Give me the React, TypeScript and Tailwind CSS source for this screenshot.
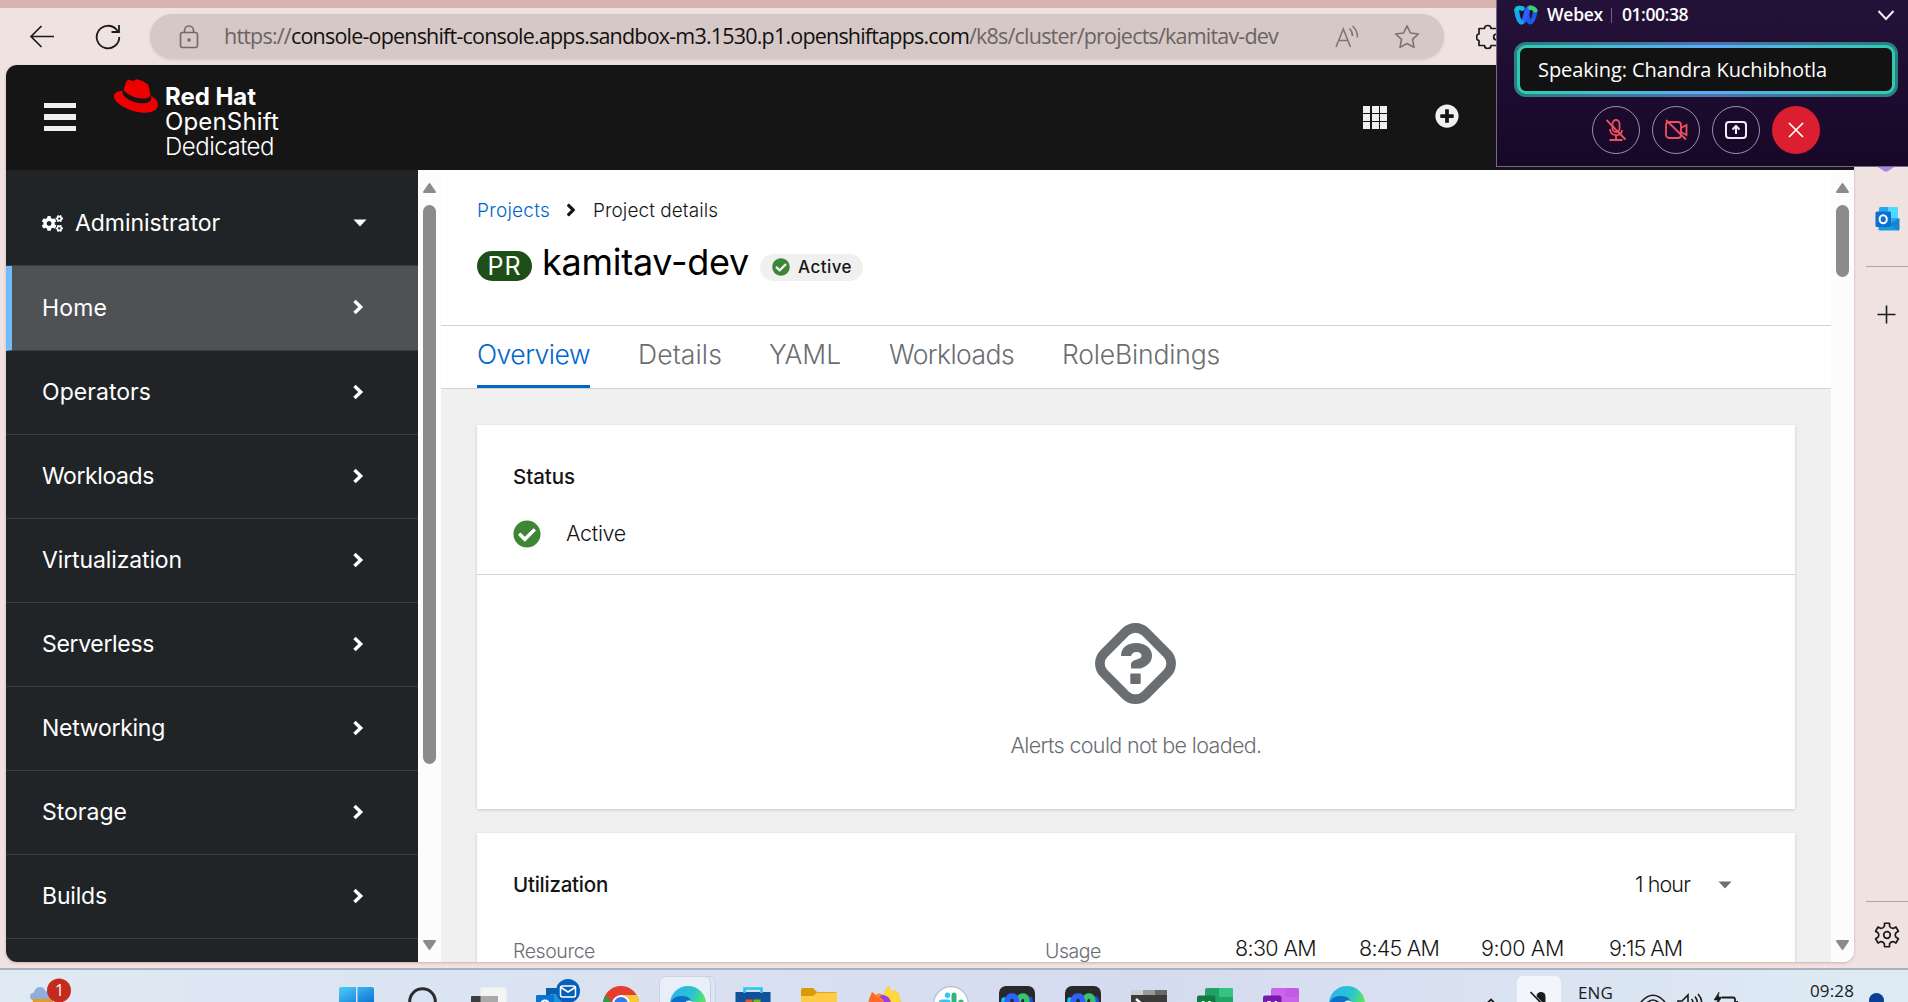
import { useLayoutEffect, useRef } from "react";
import type { ReactNode } from "react";
import { FaAngleRight, FaCheckCircle, FaCogs, FaPlusCircle } from "react-icons/fa";
import { SiRedhat } from "react-icons/si";

/* Text that tracks its letters out or in to fill a set width. */
function Label({ width, className = "", children }: { width: number; className?: string; children: ReactNode }) {
  const ref = useRef<HTMLSpanElement>(null);
  useLayoutEffect(() => {
    const el = ref.current;
    if (!el) return;
    el.style.letterSpacing = "0px";
    const count = (el.textContent ?? "").length;
    el.style.letterSpacing = `${(width - el.getBoundingClientRect().width) / count}px`;
  }, [width]);
  return (
    <span ref={ref} className={`inline-block shrink-0 whitespace-nowrap leading-none ${className}`}>
      {children}
    </span>
  );
}

function ScrollArrow({ down = false }: { down?: boolean }) {
  return (
    <svg width="15" height="12" viewBox="0 0 15 12" className={down ? "rotate-180" : ""}>
      <path d="M7.5 2 L13 10 H2 Z" fill="#8b8b8b" stroke="#8b8b8b" strokeWidth="2" strokeLinejoin="round" />
    </svg>
  );
}

function Scrollbar({ thumb }: { thumb: string }) {
  return (
    <div className="flex w-[23px] shrink-0 flex-col items-center bg-[#fcfcfc] pt-3 pb-[11px]">
      <ScrollArrow />
      <div className={`mt-[11px] w-[13px] shrink-0 rounded-full bg-[#8b8b8b] ${thumb}`} />
      <div className="grow" />
      <ScrollArrow down />
    </div>
  );
}

function BrowserToolbar() {
  return (
    <div className="flex h-[57px] shrink-0 items-center bg-[#f0e2e0]">
      <svg className="ml-[29px] shrink-0" width="26" height="24" viewBox="0 0 26 24" fill="none" stroke="#1b1b1b" strokeWidth="1.7">
        <path d="M25 11.500 H2 M12.5 1 L2 11.500 L12.5 22" />
      </svg>
      <svg className="ml-[40px] shrink-0" width="26" height="26" viewBox="0 0 26 26" fill="none" stroke="#1b1b1b" strokeWidth="1.8">
        <path d="M24.3 13 A11.3 11.3 0 1 1 21.5 5.6 L24 8 M24 1 V8 H16.5" />
      </svg>
      <div className="ml-[29px] flex h-[45px] w-[1294px] shrink-0 items-center rounded-full bg-[#d6c8c6] shadow-[0_1px_3px_#d9c8c5]">
        <svg className="ml-[29px] shrink-0" width="20" height="24" viewBox="0 0 20 24" fill="none" stroke="#716a69" strokeWidth="1.6">
          <rect x="1.5" y="7.5" width="17" height="15" rx="2" />
          <path d="M5.5 7.5 V5.5 a4.5 4.5 0 0 1 9 0 V7.5" />
          <circle cx="10" cy="15" r="0.9" fill="#716a69" />
        </svg>
        <Label width={1054} className="mb-[2px] ml-[25px] font-['Open_Sans'] text-[21.5px] text-[#6b6462]">
          https://<span className="text-[#111]">console-openshift-console.apps.sandbox-m3.1530.p1.openshiftapps.com</span>
          /k8s/cluster/projects/kamitav-dev
        </Label>
        <svg className="ml-[57px] shrink-0" width="25" height="24" viewBox="0 0 25 24" fill="none" stroke="#7b7473" strokeWidth="1.5">
          <path d="M1 22 L8.3 4 L15.5 22 M3.8 15.5 H13" />
          <path d="M14.5 3.5 C16.5 5.500 17.500 8 17.500 11 M17.5 1 C21 4 22.500 7.500 22.500 12.5" />
        </svg>
        <svg className="ml-[34px] shrink-0" width="26" height="26" viewBox="0 0 26 26" fill="none" stroke="#7b7473" strokeWidth="1.6" strokeLinejoin="round">
          <path d="M13 1.8 L16.4 9 L24.4 10 L18.500 15.400 L20 23.400 L13 19.500 L6 23.400 L7.500 15.400 L1.600 10 L9.600 9 Z" />
        </svg>
      </div>
      <svg className="ml-[32px] shrink-0" width="26" height="26" viewBox="0 0 26 26" fill="none" stroke="#1b1b1b" strokeWidth="1.7" strokeLinejoin="round">
        <path d="M3 4.500 H8.500 C8.500 0.500 15 0.500 15 4.500 H21 V10 C16.500 10 16.500 16 21 16 V21.500 H15 C15 25.500 8.500 25.500 8.500 21.500 H3 V16.500 C-0.200 16.500 -0.200 10 3 10 Z" />
      </svg>
    </div>
  );
}

function Masthead() {
  return (
    <header className="flex h-[105px] shrink-0 items-start bg-[#151515] text-white">
      <div className="mt-[38px] ml-[38px] flex w-8 shrink-0 flex-col gap-[6px]">
        <div className="h-[5.400px] bg-[#f0f0f0]" />
        <div className="h-[5.400px] bg-[#f0f0f0]" />
        <div className="h-[5.400px] bg-[#f0f0f0]" />
      </div>
      <SiRedhat className="mt-[9px] ml-[38px] size-[44px] shrink-0 text-[#ee0000]" />
      <div className="mt-[20px] ml-[7px] flex w-[200px] flex-col items-start">
        <Label width={91} className="h-[25px] font-['Inter'] text-[24px] font-bold">Red Hat</Label>
        <Label width={114} className="h-[25px] font-['Inter'] text-[24px]">OpenShift</Label>
        <Label width={109} className="h-[25px] font-['Inter'] text-[24px] font-light">Dedicated</Label>
      </div>
      <div className="mt-[41px] ml-[998px] grid w-6 shrink-0 grid-cols-3 gap-[1.500px]">
        {Array.from({ length: 9 }, (_, i) => (
          <div key={i} className="h-[6.500px] bg-[#f0f0f0]" />
        ))}
      </div>
      <FaPlusCircle className="mt-[39px] ml-[48px] size-6 shrink-0 text-[#f0f0f0]" />
    </header>
  );
}

const NAV: { label: string; width: number }[] = [
  { label: "Operators", width: 109 },
  { label: "Workloads", width: 112 },
  { label: "Virtualization", width: 140 },
  { label: "Serverless", width: 112 },
  { label: "Networking", width: 123 },
  { label: "Storage", width: 85 },
  { label: "Builds", width: 65 },
];

function NavChevron() {
  return (
    <svg className="mb-[2px]" width="14" height="16" viewBox="0 0 14 16" fill="none" stroke="#fff" strokeWidth="3.400">
      <path d="M3.500 2 L9.700 8 L3.500 14" />
    </svg>
  );
}

function Sidebar() {
  return (
    <nav className="flex w-[412px] shrink-0 flex-col bg-[#212427] font-['Inter'] text-[23px] text-white">
      <div className="flex h-[96px] shrink-0 items-center border-b border-[#3c3f42] pt-[11px] pr-[51px] pl-9">
        <FaCogs className="h-[17px] w-[21px] shrink-0" />
        <Label width={145} className="ml-3">Administrator</Label>
        <svg className="ml-auto" width="14" height="8" viewBox="0 0 14 8">
          <path d="M0.500 0.500 H13.500 L7 7.500 Z" fill="#fff" />
        </svg>
      </div>
      <div className="flex h-[85px] shrink-0 items-center justify-between border-b border-[#3c3f42] border-l-[6px] border-l-[#73bcf7] bg-[#4f5255] pr-[53px] pl-[30px]">
        <Label width={65}>Home</Label>
        <NavChevron />
      </div>
      {NAV.map(({ label, width }) => (
        <div key={label} className="flex h-[84px] shrink-0 items-center justify-between border-b border-[#3c3f42] pr-[53px] pl-9">
          <Label width={width}>{label}</Label>
          <NavChevron />
        </div>
      ))}
    </nav>
  );
}

function UnknownIcon() {
  return (
    <svg className="mr-[2px]" width="81" height="81" viewBox="0 0 81 81" fill="#6a6e73">
      <rect x="11.200" y="11.200" width="58.600" height="58.600" rx="14" transform="rotate(45 40.500 40.500)" fill="none" stroke="#6a6e73" strokeWidth="9.600" />
      <path d="M26 33 C26 25 32 20 41 20 C50 20 57 25 57 32.500 C57 40 51 43.500 45.500 45.500 H36 V42 C36 38 39 37.500 43 36 C46 35 46.500 34 46.500 32.500 C46.500 30.200 44 29 41.500 29 C38.500 29 36.500 31 36 33 Z" />
      <rect x="35.300" y="50.500" width="10.400" height="10.400" rx="1" />
    </svg>
  );
}

function ProjectPage() {
  return (
    <main className="flex w-[1390px] shrink-0 flex-col overflow-hidden bg-white font-['Inter'] text-[#151515]">
      <div className="flex h-[155px] shrink-0 flex-col pl-9">
        <div className="mt-[30px] flex h-5 items-center text-[19px] font-light">
          <Label width={73} className="text-[#0066cc]">Projects</Label>
          <FaAngleRight className="ml-[11px] size-[20px]" />
          <Label width={125} className="ml-[12px]">Project details</Label>
        </div>
        <div className="mt-[21px] flex h-[40px] items-center">
          <div className="mt-[10px] flex h-[30px] w-[55px] shrink-0 items-center justify-center rounded-full bg-[#1f4f18] text-white">
            <Label width={34} className="text-[25px]">PR</Label>
          </div>
          <Label width={207} className="mt-[2px] ml-[10px] text-[36px] text-black">kamitav-dev</Label>
          <div className="mt-[12px] ml-[11px] flex h-[27px] w-[103px] shrink-0 items-center rounded-full bg-[#f0f0f0] pl-3">
            <FaCheckCircle className="size-[18px] text-[#3e8635]" />
            <Label width={54} className="ml-2 text-[17px] font-medium">Active</Label>
          </div>
        </div>
      </div>
      <div className="flex h-[64px] shrink-0 items-stretch border-y border-[#d2d2d2] pl-9 text-[26.500px] font-light text-[#6a6e73]">
        <div className="flex h-[62px] shrink-0 flex-col border-b-[3px] border-[#0066cc] pt-[15px] text-[#0066cc]">
          <Label width={113}>Overview</Label>
        </div>
        <Label width={84} className="mt-[15px] ml-[48px]">Details</Label>
        <Label width={72} className="mt-[15px] ml-[47px]">YAML</Label>
        <Label width={125} className="mt-[15px] ml-[48px]">Workloads</Label>
        <Label width={158} className="mt-[15px] ml-[48px]">RoleBindings</Label>
      </div>
      <div className="flex grow flex-col bg-[#f0f0f0] px-9 pt-9">
        <section className="flex h-[384px] shrink-0 flex-col bg-white shadow-[0_1px_3px_rgba(3,3,3,0.180)]">
          <div className="h-[150px] shrink-0 border-b border-[#d2d2d2] pt-[41px] pl-9">
            <Label width={62} className="text-[20.500px] font-medium">Status</Label>
            <div className="mt-[30px] flex items-center">
              <FaCheckCircle className="size-7 text-[#3e8635]" />
              <Label width={60} className="ml-[25px] text-[21.500px] font-light">Active</Label>
            </div>
          </div>
          <div className="flex flex-col items-center pt-[48px]">
            <UnknownIcon />
            <Label width={251} className="mt-[31px] text-[21.500px] font-light text-[#6a6e73]">Alerts could not be loaded.</Label>
          </div>
        </section>
        <section className="mt-[24px] h-[140px] bg-white px-9 pt-[40px] shadow-[0_1px_3px_rgba(3,3,3,0.180)]">
          <div className="flex h-6 items-center">
            <Label width={95} className="text-[20.500px] font-medium">Utilization</Label>
            <Label width={55} className="ml-auto text-[21.500px] font-light">1 hour</Label>
            <svg className="mr-[27px] ml-[28px]" width="14" height="8" viewBox="0 0 14 8">
              <path d="M0.500 0.500 H13.500 L7 7.500 Z" fill="#6a6e73" />
            </svg>
          </div>
          <div className="mt-[40px] flex h-6 items-center text-[21.500px] font-light">
            <Label width={82} className="mt-[6px] text-[19.500px] text-[#6a6e73]">Resource</Label>
            <Label width={56} className="mt-[6px] ml-[450px] text-[19.500px] text-[#6a6e73]">Usage</Label>
            <Label width={81} className="ml-[134px]">8:30 AM</Label>
            <Label width={80} className="ml-[43px]">8:45 AM</Label>
            <Label width={83} className="ml-[42px]">9:00 AM</Label>
            <Label width={73} className="ml-[45px]">9:15 AM</Label>
          </div>
        </section>
      </div>
    </main>
  );
}

/* Six-toothed outline of a cog, traced around its centre. */
const COG = Array.from({ length: 6 }, (_, i) => {
  const at = (deg: number, r: number) => {
    const a = ((i * 60 + deg - 90) * Math.PI) / 180;
    return `${(13 + r * Math.cos(a)).toFixed(2)} ${(13 + r * Math.sin(a)).toFixed(2)}`;
  };
  return `${i ? "L" : "M"}${at(-12, 12)} L${at(12, 12)} L${at(17, 9)} Q${at(30, 7.6)} ${at(43, 9)}`;
}).join(" ");

function EdgeSidebar() {
  return (
    <aside className="flex w-[54px] shrink-0 flex-col items-end">
      <svg className="mt-[96px] mr-[12px] shrink-0" width="20" height="14" viewBox="0 0 20 14">
        <path d="M0 5 H20 L12 10 Q10 11.500 8 10 Z" fill="#b083e0" />
      </svg>
      <svg className="mt-[31px] mr-[8px] shrink-0" width="25" height="26" viewBox="0 0 25 26">
        <rect x="4" y="1" width="19" height="22" rx="1.500" fill="#28a8ea" />
        <path d="M13 1 H21.500 Q23 1 23 2.500 V12 H13 Z" fill="#50d9ff" />
        <path d="M3.500 13 L24 24.500 H5 Q3.500 24.500 3.500 23 Z" fill="#1999df" />
        <path d="M14 18 L24.500 12 V23 Q24.500 24.500 23 24.500 Z" fill="#1486cf" />
        <rect x="0.500" y="5.500" width="15.500" height="15.500" rx="1.500" fill="#0a6fd0" />
        <ellipse cx="8.200" cy="13.200" rx="3.600" ry="4" fill="none" stroke="#fff" strokeWidth="2" />
      </svg>
      <div className="mt-[34px] h-px w-[42px] shrink-0 bg-[#b5a6a4]" />
      <svg className="mt-[38px] mr-[12px] shrink-0" width="19" height="19" viewBox="0 0 19 19" stroke="#1b1b1b" strokeWidth="1.600">
        <path d="M9.500 0.500 V18.500 M0.500 9.500 H18.500" />
      </svg>
      <div className="mt-[577px] h-px w-[42px] shrink-0 bg-[#b5a6a4]" />
      <svg className="mt-[20px] mr-[8px] shrink-0" width="26" height="26" viewBox="0 0 26 26" fill="none" stroke="#1b1b1b" strokeWidth="1.700" strokeLinejoin="round">
        <path d={`${COG} Z`} />
        <circle cx="13" cy="13" r="3.300" />
      </svg>
    </aside>
  );
}

function WebexMark({ className }: { className: string }) {
  return (
    <svg className={className} viewBox="0 0 24 20" fill="none" strokeLinecap="round" strokeWidth="4.600">
      <path d="M21.500 5.500 C20.500 11 19 17.200 16 17.200 C13 17.200 12 2.800 15.500 2.800" stroke="#1f5bea" />
      <path d="M2.600 5.500 C3.500 12 5 17.200 8 17.200 C11.500 17.200 11.500 2.800 16 2.800" stroke="#2e62ff" />
      <path d="M2.600 5.500 C3.500 12 5 17.200 7.500 17.200" stroke="#12a8e8" />
      <path d="M2.600 4.500 C3 3 6 2.500 8.500 3.500" stroke="#0bbfe0" />
      <path d="M16.500 2.800 C18.500 2.800 20 3.500 21 5.200" stroke="#3fd06a" />
    </svg>
  );
}

function WebexWindow() {
  return (
    <div className="absolute top-0 right-0 flex h-[167px] w-[412px] flex-col border-b border-l border-[#75688a] bg-linear-to-b from-[#241239] to-[#170727] font-['Open_Sans'] text-white">
      <div className="flex h-[30px] shrink-0 items-center pl-[17px]">
        <WebexMark className="h-5 w-6 shrink-0" />
        <Label width={56} className="ml-[9px] text-[17.500px] font-semibold">Webex</Label>
        <div className="ml-[8px] h-[15px] w-px bg-[#6e6280]" />
        <Label width={66} className="ml-[10px] text-[17.500px] font-semibold">01:00:38</Label>
        <svg className="ml-auto mr-[13px]" width="18" height="12" viewBox="0 0 18 12" fill="none" stroke="#f3f0f5" strokeWidth="2">
          <path d="M1.500 2 L9 10 L16.500 2" />
        </svg>
      </div>
      <div className="mt-[12px] ml-[17px] h-[55px] w-[384px] shrink-0 rounded-[12px] bg-linear-to-r from-[#2a7f80] via-[#4b76a9] to-[#2a7f80] p-[3px]">
        <div className="h-full rounded-[9px] bg-linear-to-r from-[#2fc9b2] via-[#5ea9fb] to-[#2fc9b2] p-[3px]">
          <div className="flex h-full items-center rounded-[6px] bg-[#121212] pl-[18px]">
            <Label width={289} className="text-[20px]">Speaking: Chandra Kuchibhotla</Label>
          </div>
        </div>
      </div>
      <div className="mt-[8.500px] ml-[95px] flex gap-3">
        <div className="flex size-12 items-center justify-center rounded-full border border-[#9a90a8]">
          <svg width="22" height="24" viewBox="0 0 22 24" fill="none" stroke="#ee5060" strokeWidth="1.800">
            <rect x="7.500" y="2" width="7" height="12" rx="3.500" />
            <path d="M5 11 C5 19 17 19 17 12 M11 17 V22 M4.500 22 H17.500 M1.500 2 L20.500 21.500" />
          </svg>
        </div>
        <div className="flex size-12 items-center justify-center rounded-full border border-[#9a90a8]">
          <svg width="24" height="24" viewBox="0 0 24 24" fill="none" stroke="#ee5060" strokeWidth="1.800">
            <rect x="2" y="4" width="15" height="16" rx="3" />
            <path d="M17 10 L22.500 7 V17 L17 14 M2 2 L22 21.500" />
          </svg>
        </div>
        <div className="flex size-12 items-center justify-center rounded-full border border-[#9a90a8]">
          <svg width="24" height="20" viewBox="0 0 24 20" fill="none" stroke="#f0eef3" strokeWidth="2">
            <rect x="2" y="2" width="20" height="16" rx="3" />
            <path d="M12 14 V6.500 M8.500 9.500 L12 6 L15.500 9.500" />
          </svg>
        </div>
        <div className="flex size-12 items-center justify-center rounded-full bg-[#db1f30]">
          <svg width="16" height="16" viewBox="0 0 16 16" stroke="#fff" strokeWidth="1.700">
            <path d="M1 1 L15 15 M15 1 L1 15" />
          </svg>
        </div>
      </div>
    </div>
  );
}

function EdgeLogo({ id }: { id: string }) {
  return (
    <svg className="shrink-0" width="36" height="36" viewBox="0 0 36 36">
      <defs>
        <linearGradient id={id} x1="0" y1="0" x2="1" y2="0.450">
          <stop offset="0.100" stopColor="#2fb2ee" />
          <stop offset="0.600" stopColor="#28c4cf" />
          <stop offset="1" stopColor="#63e94f" />
        </linearGradient>
      </defs>
      <circle cx="18" cy="18" r="18" fill={`url(#${id})`} />
      <path d="M0 19 C1 12 7 10 12 10 C19 10 22 14 22 18 L12 30 L2 26 Z" fill="#0c6fc4" />
      <circle cx="19" cy="19" r="4.500" fill="#eaf6fc" />
    </svg>
  );
}

function WebexTile() {
  return (
    <svg width="36" height="36" viewBox="0 0 36 36" fill="none" strokeLinecap="round" strokeWidth="5.500">
      <rect width="36" height="36" rx="7" fill="#29292b" />
      <path d="M30 13 C31.500 13 31 16 31 18" stroke="#1a53d8" />
      <path d="M18 22 C19 14 20 10 24 10 C28 10 28 14 28 20" stroke="#37c46d" />
      <path d="M5 14 C5 24 9 22 9 17" stroke="#13c6ee" />
      <path d="M8 16 C9 10 11 10 14 10 C18 10 18 20 20 24" stroke="#2e62ff" />
    </svg>
  );
}

function OfficeTile({ letter, dark, tones }: { letter: string; dark: string; tones: [string, string] }) {
  return (
    <svg width="36" height="34" viewBox="0 0 36 34">
      <rect x="8" width="28" height="30" rx="2" fill={tones[0]} />
      <path d="M22 0 H34 Q36 0 36 2 V9 H22 Z" fill={tones[1]} />
      <rect y="7.500" width="18.500" height="19" rx="2" fill={dark} />
      <text x="9.200" y="22.500" textAnchor="middle" fontSize="15" fontWeight="700" fill="#fff" className="font-['Open_Sans']">
        {letter}
      </text>
    </svg>
  );
}

function TaskCell({ top, children }: { top: string; children: ReactNode }) {
  return <div className={`flex w-[66px] shrink-0 justify-center ${top}`}>{children}</div>;
}

function Taskbar() {
  return (
    <footer className="flex h-[34px] shrink-0 items-start overflow-hidden border-t-2 border-[#a9b1bf] bg-linear-to-r from-[#dfeaf4] via-[#d5dbef] via-60% to-[#deebf4]">
      <div className="flex w-[324px] shrink-0 pt-[8px] pl-[29px]">
        <svg width="46" height="26" viewBox="0 0 46 26">
          <path d="M5 22 Q1 22 1 18.500 Q1 15 5 14.500 Q6 9 11 9 Q15 9 16.500 13 L22 14 V22 Z" fill="#8faede" />
          <path d="M3 21 H24 V27 H5 Z" fill="#e29a2c" />
          <circle cx="30" cy="12.500" r="12" fill="#c42b1c" />
          <text x="30.500" y="18" textAnchor="middle" fontSize="16" fill="#fff" className="font-['Open_Sans']">1</text>
        </svg>
      </div>
      <TaskCell top="pt-[17px]">
        <svg width="36" height="36" viewBox="0 0 36 36">
          <defs>
            <linearGradient id="windows" x1="0" y1="0" x2="1" y2="1">
              <stop stopColor="#4ccdfb" />
              <stop offset="1" stopColor="#0a6fd2" />
            </linearGradient>
          </defs>
          <path d="M2 0 H17 V17 H0 V2 Q0 0 2 0 Z M18.500 0 H33 Q35 0 35 2 V17 H18.500 Z" fill="url(#windows)" />
        </svg>
      </TaskCell>
      <TaskCell top="pt-[17px]">
        <svg width="30" height="30" viewBox="0 0 30 30" fill="#d7e3f3" stroke="#2c2c2c" strokeWidth="3">
          <circle cx="14.500" cy="14.500" r="12.800" />
        </svg>
      </TaskCell>
      <TaskCell top="pt-[17px]">
        <svg width="36" height="30" viewBox="0 0 36 30">
          <rect x="9.500" y="0.500" width="26" height="26" rx="1" fill="#f4f4f4" />
          <rect x="0" y="9" width="26" height="20" rx="1" fill="#3d3d3d" />
          <rect x="9.500" y="9" width="17.500" height="18" fill="#a9a9a9" />
        </svg>
      </TaskCell>
      <TaskCell top="pt-[9px]">
        <svg width="44" height="30" viewBox="0 0 44 30" className="ml-[6px]">
          <rect x="10" y="9" width="26" height="20" fill="#0a5ea9" />
          <rect x="14" y="15" width="12" height="14" fill="#1a93e0" />
          <rect x="0" y="16" width="18" height="18" rx="1" fill="#0a74cf" />
          <circle cx="9" cy="25.500" r="4" fill="none" stroke="#fff" strokeWidth="2.200" />
          <circle cx="32" cy="12" r="12" fill="#0560b8" />
          <rect x="24.500" y="7" width="15" height="11" rx="2" fill="none" stroke="#fff" strokeWidth="1.500" />
          <path d="M25 8.500 L32 13 L39 8.500" fill="none" stroke="#fff" strokeWidth="1.500" />
        </svg>
      </TaskCell>
      <TaskCell top="pt-[16px]">
        <svg width="36" height="36" viewBox="0 0 36 36">
          <circle cx="18" cy="18" r="18" fill="#e43e2f" />
          <path d="M2.500 9 L14 22 L10 34 A18 18 0 0 1 2.500 9 Z" fill="#2c9c48" />
          <path d="M18 9 H33.600 A18 18 0 0 1 18 36 Z" fill="#fcc934" />
          <circle cx="18" cy="18" r="9" fill="#fff" />
          <circle cx="18" cy="18" r="7" fill="#2f7cf0" />
        </svg>
      </TaskCell>
      <div className="-ml-px flex w-[67px] shrink-0 pt-[6px] pl-[6px]">
        <div className="flex h-[30px] w-[57px] rounded-t-[6px] border border-[#cbd3e8] bg-[#dde4f3]">
          <div className="flex h-full w-[51px] justify-center rounded-t-[6px] border-r border-[#c6cfe6] bg-[#e9eef8] pt-[9px] pl-[6px]">
            <EdgeLogo id="edge-active" />
          </div>
        </div>
      </div>
      <TaskCell top="pt-[17px]">
        <svg width="36" height="30" viewBox="0 0 36 30">
          <path d="M0.500 5 H35.500 V30 H0.500 Z" fill="#11509a" />
          <path d="M9.500 6 V1.500 H26.500 V6" fill="none" stroke="#27c4f5" strokeWidth="2.600" />
          <rect x="10.500" y="12.500" width="7" height="7" fill="#f25022" />
          <rect x="18.500" y="12.500" width="7" height="7" fill="#7fba00" />
        </svg>
      </TaskCell>
      <TaskCell top="pt-[18px]">
        <svg width="36" height="30" viewBox="0 0 36 30">
          <path d="M0 2 Q0 0 2 0 H12 L16 4 H34 Q36 4 36 6 V8 H0 Z" fill="#dc9a0a" />
          <path d="M0 8 H12 L16 4.800 H36 V30 H0 Z" fill="#fdcb46" />
        </svg>
      </TaskCell>
      <TaskCell top="pt-[16px]">
        <svg width="36" height="34" viewBox="0 0 36 34">
          <path d="M1 22 C1 12 4 10 5 6 L9 9 C12 6 14 8 17 9 C17 5 19 2 22 0 C23 6 26 6 28 4 C32 8 34 12 34 22 Z" fill="#ff8a20" />
          <path d="M17 9 C17 5 19 2 22 0 C23 6 26 6 28 4 C32 8 34 12 34 22 H22 Z" fill="#ffd93a" />
          <path d="M12 11 C16 7 25 10 24 20 H15 C18 17 17 13 12 11 Z" fill="#9a3fe0" />
          <path d="M2 14 L5 6 L9 10 L16 16 L4 24 Z" fill="#ff6a2a" />
        </svg>
      </TaskCell>
      <TaskCell top="pt-[16px]">
        <svg width="36" height="36" viewBox="0 0 36 36">
          <circle cx="18" cy="18" r="17.300" fill="#fff" stroke="#b6bed3" strokeWidth="1.200" />
          <circle cx="14.500" cy="9.300" r="2.700" fill="#36c5f0" />
          <rect x="6" y="13.500" width="11.500" height="5" rx="2.500" fill="#36c5f0" />
          <rect x="18.500" y="6.500" width="5" height="12" rx="2.500" fill="#2eb67d" />
          <circle cx="28" cy="16" r="2.600" fill="#2eb67d" />
        </svg>
      </TaskCell>
      <TaskCell top="pt-[16px]">
        <WebexTile />
      </TaskCell>
      <TaskCell top="pt-[16px]">
        <WebexTile />
      </TaskCell>
      <TaskCell top="pt-[20px]">
        <svg width="36" height="30" viewBox="0 0 36 30">
          <rect width="36" height="30" rx="1.500" fill="#3b3b3b" />
          <rect width="12" height="5" fill="#cdcdcd" />
          <rect x="12" width="12" height="5" fill="#999" />
          <rect x="24" width="12" height="5" fill="#676767" />
          <path d="M5 9 L12 15" stroke="#fff" strokeWidth="2.500" />
        </svg>
      </TaskCell>
      <TaskCell top="pt-[18px]">
        <OfficeTile letter="X" dark="#107c41" tones={["#21a366", "#33c481"]} />
      </TaskCell>
      <TaskCell top="pt-[18px]">
        <OfficeTile letter="N" dark="#7719aa" tones={["#ca64ea", "#c45be8"]} />
      </TaskCell>
      <TaskCell top="pt-[16px]">
        <EdgeLogo id="edge-second" />
      </TaskCell>
      <svg className="mt-[28px] ml-[105px] shrink-0" width="12" height="8" viewBox="0 0 12 8" fill="none" stroke="#1b1b1b" strokeWidth="1.800">
        <path d="M1 6.500 L6 1.500 L11 6.500" />
      </svg>
      <div className="mt-[6px] ml-[20px] flex h-[30px] w-[44px] shrink-0 justify-center rounded-t-[6px] bg-[#f2f6fb] pt-[14px]">
        <svg width="20" height="22" viewBox="0 0 20 22">
          <rect x="7.500" y="2" width="9" height="14" rx="4.500" fill="#1b1b1b" />
          <path d="M1 2.500 L19 21" stroke="#f2f6fb" strokeWidth="4" />
          <path d="M1.500 2 L19 20" stroke="#1b1b1b" strokeWidth="1.700" />
        </svg>
      </div>
      <Label width={35} className="mt-[14px] ml-[17px] font-['Open_Sans'] text-[17px] text-[#1b1b1b]">ENG</Label>
      <svg className="mt-[24px] ml-[27px] shrink-0" width="26" height="14" viewBox="0 0 26 14" fill="none" stroke="#1b1b1b" strokeWidth="1.700">
        <path d="M1 8 Q13 -5.500 25 8 M5 11 Q13 1 21 11" />
      </svg>
      <svg className="mt-[23px] ml-[11px] shrink-0" width="26" height="16" viewBox="0 0 26 16" fill="none" stroke="#1b1b1b" strokeWidth="1.600">
        <path d="M1 16 V8 H5 L11 2 V16 M14.500 6 Q17 9 16 13 M18 3.500 Q21.500 8 20 14 M21 1 Q26.500 7 24 15" />
      </svg>
      <svg className="mt-[22px] ml-[10px] shrink-0" width="26" height="14" viewBox="0 0 26 14" fill="none" stroke="#1b1b1b" strokeWidth="1.800">
        <path d="M9 5.500 H20 Q22 5.500 22 7.500 V14 M24 9 V12" />
        <path d="M6 0 L1 8 H4.500 L3.500 13 L9 5 H5.500 Z" fill="#1b1b1b" strokeWidth="0.500" />
      </svg>
      <Label width={44} className="mt-[12px] ml-[71px] font-['Open_Sans'] text-[17px] text-[#1b1b1b]">09:28</Label>
      <div className="mt-[23px] ml-[15px] size-[15px] shrink-0 rounded-full bg-[#0b3f94]" />
    </footer>
  );
}

export default function App() {
  return (
    <div className="relative flex h-[1002px] w-[1908px] flex-col overflow-hidden bg-[#f0e2e0] font-['Inter']">
      <div className="h-2 shrink-0 bg-[#d9b3ae]" />
      <BrowserToolbar />
      <div className="flex h-[903px] shrink-0 pl-1.5">
        <div className="flex h-[897px] w-[1848px] shrink-0 flex-col overflow-hidden rounded-[11px] bg-white shadow-[0_1px_3px_#c9b4b1]">
          <Masthead />
          <div className="flex h-[792px]">
            <Sidebar />
            <Scrollbar thumb="h-[559px]" />
            <ProjectPage />
            <Scrollbar thumb="h-[72px]" />
          </div>
        </div>
        <EdgeSidebar />
      </div>
      <Taskbar />
      <WebexWindow />
    </div>
  );
}
